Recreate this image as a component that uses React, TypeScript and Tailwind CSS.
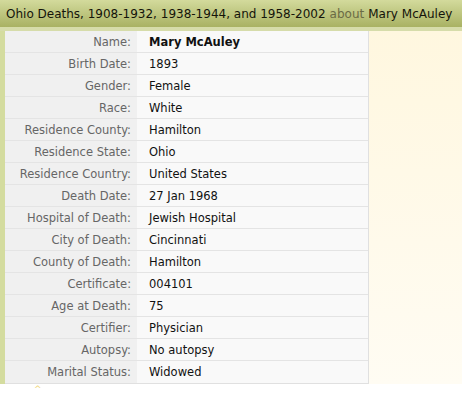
const rows: [string, string][] = [
  ["Name:", "Mary McAuley"],
  ["Birth Date:", "1893"],
  ["Gender:", "Female"],
  ["Race:", "White"],
  ["Residence County:", "Hamilton"],
  ["Residence State:", "Ohio"],
  ["Residence Country:", "United States"],
  ["Death Date:", "27 Jan 1968"],
  ["Hospital of Death:", "Jewish Hospital"],
  ["City of Death:", "Cincinnati"],
  ["County of Death:", "Hamilton"],
  ["Certificate:", "004101"],
  ["Age at Death:", "75"],
  ["Certifier:", "Physician"],
  ["Autopsy:", "No autopsy"],
  ["Marital Status:", "Widowed"],
];

export default function App() {
  return (
    <div className="w-[462px] h-[401px] bg-white overflow-hidden font-['DejaVu_Sans',sans-serif]">
      <div className="h-[27px] flex items-center pl-[6px] bg-gradient-to-b from-[#d3da9c] to-[#a9b263] text-[12px] text-[#14140a] whitespace-nowrap">
        Ohio Deaths, 1908-1932, 1938-1944, and 1958-2002
        <span className="ml-[4px] text-[#6b6b45]">about</span>
        <span className="ml-[4px]">Mary McAuley</span>
      </div>
      <div className="h-[4px] bg-[#d6dcaa]" />
      <div className="flex">
        <div className="w-[5px] bg-[#d4dc9f]" />
        <div className="w-[364px] border-r border-b border-[#e0e0e0]">
          {rows.map(([label, value], i) => (
            <div
              key={label}
              className={`flex h-[22px] text-[11.5px] ${i < rows.length - 1 ? "border-b border-[#e4e4e4]" : ""}`}
            >
              <div className="w-[132px] bg-[#f0f0f0] text-right pr-[6px] text-[#666666] leading-[22px]">
                {label}
              </div>
              <div className={`flex-1 bg-[#f9f9f9] pl-[12px] leading-[22px] text-[#111111] ${i === 0 ? "font-bold" : ""}`}>
                {value}
              </div>
            </div>
          ))}
        </div>
        <div className="flex-1 bg-gradient-to-b from-[#fff7df] to-[#fffcf3]" />
      </div>
      <div className="relative h-[16px]">
        <div className="absolute left-[34px] top-[1px] text-[#f0d77a] text-[9px] leading-none">^</div>
      </div>
    </div>
  );
}
